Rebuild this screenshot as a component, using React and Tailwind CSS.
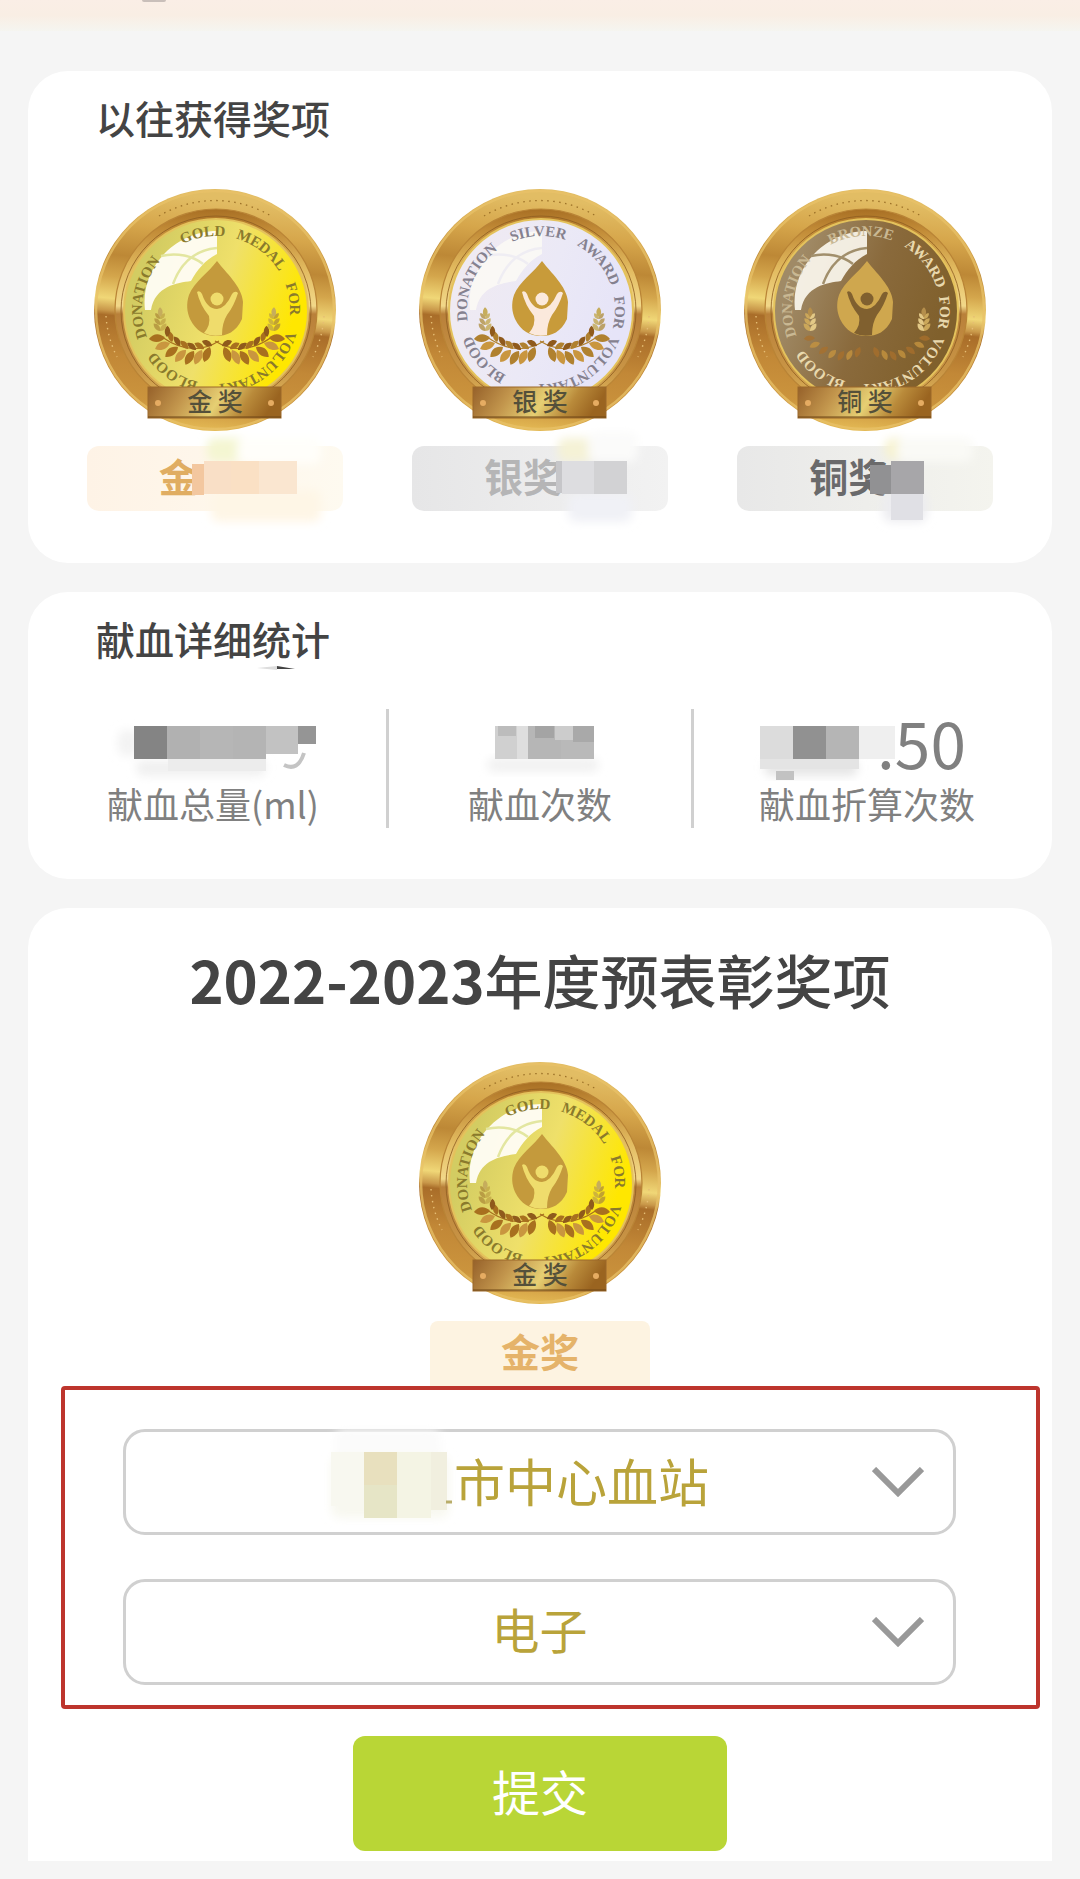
import React from "react";

const CJK = "font-['Noto_Sans_CJK_SC',sans-serif]";

const THEMES = {
  gold: {
    label: "金 奖",
    face: ["#d3cc62", "#efe06a", "#ffe700"],
    ink: "#8a7a2c",
    drop: "#c49a3c",
    figure: "#efdc6c",
    leaf: "#a8701f",
    glareLine: "#e3e6a0",
    glare: 0.95,
    words: [["GOLD", -10], ["MEDAL", 37], ["FOR", 82], ["VOLUNTARY", 143], ["BLOOD", 215], ["DONATION", 280]],
  },
  silver: {
    label: "银 奖",
    face: ["#efeaf2", "#ebe9f6", "#e6e4f8"],
    ink: "#85818f",
    drop: "#c89b3a",
    figure: "#fbe9dc",
    leaf: "#b0812f",
    glareLine: "#efedf3",
    glare: 0.7,
    words: [["SILVER", -2], ["AWARD", 50], ["FOR", 92], ["VOLUNTARY", 147], ["BLOOD", 229], ["DONATION", 293]],
  },
  bronze: {
    label: "铜 奖",
    face: ["#a08a66", "#8a6a3c", "#80602c"],
    ink: "#e9d9ae",
    drop: "#cfa74e",
    figure: "#80602f",
    leaf: "#a9702c",
    glareLine: "#a18f6c",
    glare: 0.88,
    words: [["BRONZE", -4], ["AWARD", 52], ["FOR", 92], ["VOLUNTARY", 147], ["BLOOD", 217], ["DONATION", 281]],
  },
};

const LEAVES = [
  [8, 158, 35], [16, 161, 30], [24, 162, 24], [32, 161, 14], [40, 158, 4], [48, 154, -12], [53, 149, -30],
];

function Leaf({ x, y, r, fill, s = 1 }) {
  return (
    <path
      d="M0 0 C4 -5 10 -5 14 0 C10 4 4 4 0 0Z"
      fill={fill}
      transform={`translate(${x} ${y}) rotate(${r}) scale(${s})`}
    />
  );
}

function Branch({ t, bronze }) {
  return (
    <g>
      {!bronze && <path d="M-3 153 Q24 170 54 149" fill="none" stroke={t.leaf} strokeWidth="1.2" />}
      {LEAVES.map(([x, y, r], i) => (
        <g key={i} opacity={bronze ? 0.75 : 1}>
          {!bronze && <Leaf x={x - 4} y={y} r={r - 62} fill={i % 2 ? t.leaf : "#8f5a1c"} s={0.8} />}
          <Leaf x={x - 2} y={y + 1} r={r + 34} fill={i % 2 ? "#c9963f" : t.leaf} s={bronze ? 0.8 : 1.15} />
        </g>
      ))}
      {[0, 1, 2].map((i) => (
        <g key={i} opacity={bronze ? 1 : 0.75}>
          <Leaf x={56} y={143 - i * 6} r={-130} fill={bronze ? "#e3c987" : "#c0a446"} s={0.7 - i * 0.08} />
          <Leaf x={56} y={143 - i * 6} r={-50} fill={bronze ? "#cba75a" : "#ae8c3a"} s={0.7 - i * 0.08} />
        </g>
      ))}
      <Leaf x={56} y={129} r={-90} fill={bronze ? "#b58f4c" : "#c6ad5c"} s={0.7} />
    </g>
  );
}

function Medal({ kind, id }) {
  const t = THEMES[kind];
  const bronze = kind === "bronze";
  const u = (n) => `${id}-${n}`;
  return (
    <svg viewBox="0 0 244 244" className="block size-[244px]" role="img" aria-label={t.label}>
      <defs>
        <linearGradient id={u("rim")} x1="0.1" y1="0" x2="0" y2="1">
          <stop offset="0" stopColor="#e2bd64" />
          <stop offset="0.14" stopColor="#d6a64b" />
          <stop offset="0.27" stopColor="#bd8836" />
          <stop offset="0.36" stopColor="#d4a64c" />
          <stop offset="0.45" stopColor="#f0d777" />
          <stop offset="0.5" stopColor="#c9984a" />
          <stop offset="0.52" stopColor="#a96d29" />
          <stop offset="0.68" stopColor="#c28837" />
          <stop offset="0.85" stopColor="#cb943d" />
          <stop offset="1" stopColor="#f0cc60" />
        </linearGradient>
        <linearGradient id={u("lip")} x1="0" y1="0" x2="0" y2="1">
          <stop offset="0" stopColor="#a86f24" />
          <stop offset="0.1" stopColor="#c18a36" />
          <stop offset="0.3" stopColor="#e2bb60" />
          <stop offset="0.48" stopColor="#f2d889" />
          <stop offset="0.52" stopColor="#b9803a" />
          <stop offset="0.8" stopColor="#c99545" />
          <stop offset="1" stopColor="#e4c063" />
        </linearGradient>
        <linearGradient id={u("face")} x1="0" y1="0.3" x2="1" y2="0.65">
          <stop offset="0.1" stopColor={t.face[0]} />
          <stop offset="0.5" stopColor={t.face[1]} />
          <stop offset="0.9" stopColor={t.face[2]} />
        </linearGradient>
        <linearGradient id={u("plate")} x1="0" y1="0" x2="1" y2="0.15">
          <stop offset="0" stopColor="#96612a" />
          <stop offset="0.3" stopColor="#c2954c" />
          <stop offset="0.58" stopColor="#e6cf73" />
          <stop offset="0.8" stopColor="#b98a3a" />
          <stop offset="1" stopColor="#9a6420" />
        </linearGradient>
        <path id={u("arc")} d="M49 122 A74 74 0 0 1 197 122" />
      </defs>

      <circle cx="122" cy="122" r="121" fill={`url(#${u("rim")})`} />
      <circle cx="122" cy="122" r="119" fill="none" stroke="#e8c268" strokeWidth="2.5" opacity="0.75" />
      <path d="M66 28 A109 109 0 0 1 178 28" fill="none" stroke="#9c7128" strokeWidth="1.3" strokeDasharray="1.5 4.5" />
      <path d="M13 128 A109 109 0 0 0 24 169 M231 128 A109 109 0 0 1 220 169" fill="none" stroke="#e6bd74" strokeWidth="1.4" strokeDasharray="1.5 4.5" />
      <circle cx="123" cy="122" r="101" fill={`url(#${u("lip")})`} />
      <circle cx="123" cy="122" r="101" fill="none" stroke="#b98436" strokeWidth="1.2" />
      <circle cx="123" cy="123" r="95" fill="none" stroke="#8d5c20" strokeWidth="1" opacity="0.8" />
      <circle cx="123" cy="123" r="92" fill={`url(#${u("face")})`} stroke="#e4c25c" strokeWidth="2" />

      <path
        d="M52 122 C47 80 82 43 124 43 L124 66 C112 72 104 82 98 93 C84 95 62 98 58 122Z"
        fill="#fffdf5"
        opacity={t.glare}
      />
      <path d="M68 68 C84 64 100 68 110 76 M80 96 C88 74 102 62 124 60" fill="none" stroke={t.glareLine} strokeWidth="2.5" />

      {t.words.map(([word, angle]) => (
        <g key={word} transform={`rotate(${angle} 123 122)`}>
          <text
            fontFamily="Liberation Serif, serif"
            fontSize="15"
            fontWeight="700"
            fill={bronze && (word === "BRONZE" || word === "DONATION") ? "#c9b893" : t.ink}
            textAnchor="middle"
          >
            <textPath href={`#${u("arc")}`} startOffset="50%">
              {word}
            </textPath>
          </text>
        </g>
      ))}

      <path
        d="M124 73 C132 84 149 98 150 114 L149 131 C143 144 134 148 123 148 C112 148 103 143 97 131 C94 124 93 116 96 107 C101 94 116 84 124 73Z"
        fill={t.drop}
      />
      <circle cx="124" cy="111" r="6.5" fill={t.figure} />
      <path
        d="M104 104 Q107 102 109 106 Q114 121 124 121 Q133 120 139 106 Q142 102 145 105 Q141 118 134 127 Q129 135 129 147 Q119 149 111 145 Q118 137 116 128 Q107 117 104 104Z"
        fill={t.figure}
      />
      <g transform="translate(125 0)">
        <Branch t={t} bronze={bronze} />
      </g>
      <g transform="translate(123 0) scale(-1 1)">
        <Branch t={t} bronze={bronze} />
      </g>

      <rect x="55" y="199" width="133" height="31" fill={`url(#${u("plate")})`} stroke="#9b692a" strokeWidth="1" />
      <path d="M55 229 H188" stroke="#6f4616" strokeWidth="1" />
      <circle cx="65" cy="215" r="3" fill="#e6ac62" />
      <circle cx="178" cy="215" r="3" fill="#e6ac62" />
      <text x="122" y="223" fontFamily="Noto Sans CJK SC, sans-serif" fontSize="25" fontWeight="500" fill="#54503a" textAnchor="middle">
        {t.label}
      </text>
    </svg>
  );
}

/* Pixelated patch that hides private values. Each block is [x, y, w, h, colour]. */
function Mosaic({ id, w, h, haze = [], blocks = [], className = "", children }) {
  return (
    <svg viewBox={`0 0 ${w} ${h}`} width={w} height={h} aria-hidden="true" className={`overflow-visible ${className}`}>
      <defs>
        <filter id={id} x="-30%" y="-30%" width="160%" height="160%">
          <feGaussianBlur stdDeviation="5" />
        </filter>
      </defs>
      <g filter={`url(#${id})`}>
        {haze.map(([x, y, bw, bh, c], i) => (
          <rect key={i} x={x} y={y} width={bw} height={bh} rx="8" fill={c} />
        ))}
      </g>
      {blocks.map(([x, y, bw, bh, c], i) => (
        <rect key={i} x={x} y={y} width={bw} height={bh} fill={c} />
      ))}
      {children}
    </svg>
  );
}

const AWARDS = [
  {
    kind: "gold",
    text: "金",
    box: "bg-linear-to-r from-[#fef3e6] to-[#fefaf0] text-[#e0ad62]",
    haze: [[120, -8, 56, 24, "#f4f6d2"], [150, -8, 84, 26, "#fffefa"], [124, 44, 110, 32, "#fef6e6"]],
    blocks: [[105, 18, 12, 31, "#f3c79f"], [117, 15, 27, 33, "#f9dfc6"], [144, 15, 28, 33, "#fae0c4"], [172, 15, 38, 33, "#fae6d0"]],
  },
  {
    kind: "silver",
    text: "银奖",
    box: "bg-linear-to-r from-[#e6e6e7] to-[#f2f2f2] text-[#b5b5b6]",
    haze: [[146, -8, 40, 24, "#f5f2d6"], [176, -14, 50, 30, "#fbfbfa"], [156, 48, 64, 28, "#f0f1f6"]],
    blocks: [[144, 15, 6, 32, "#c6c6c9"], [150, 15, 32, 33, "#dddde0"], [182, 15, 33, 33, "#d2d2d4"]],
  },
  {
    kind: "bronze",
    text: "铜奖",
    box: "bg-linear-to-r from-[#e8e8e8] to-[#f4f4ee] text-[#6a6a6b]",
    haze: [[148, -8, 36, 22, "#f7f3d0"], [160, -8, 76, 24, "#fafaf6"], [146, 46, 44, 30, "#ececf0"]],
    blocks: [[133, 19, 21, 29, "#919193"], [154, 15, 33, 33, "#a7a6a9"], [154, 48, 32, 26, "#e0e0e5"]],
  },
];

function AwardBadge({ award }) {
  return (
    <div className={`relative mt-3.5 flex h-[65px] w-64 items-center rounded-xl pb-2 pl-[72px] ${award.box}`}>
      <span className="text-[39px] leading-12 font-bold">{award.text}</span>
      <Mosaic id={`hz-${award.kind}`} w={256} h={65} haze={award.haze} blocks={award.blocks} className="absolute inset-0" />
    </div>
  );
}

function SectionTitle({ children }) {
  return <h2 className="pl-[68px] text-[39px] leading-12 font-medium text-[#444]">{children}</h2>;
}

function Picker({ id, label, option, size, children }) {
  return (
    <div className="relative">
      <select
        id={id}
        aria-label={label}
        className={`h-[106px] w-full appearance-none rounded-[22px] border-[3px] border-[#d0d0d0] bg-white text-center text-[#b9a33a] [text-align-last:center] ${size}`}
      >
        <option>{option}</option>
      </select>
      {children}
      <svg viewBox="0 0 52 30" aria-hidden="true" className="pointer-events-none absolute top-[38px] right-8 h-[30px] w-[52px]">
        <path d="M2 2 L26 26 L50 2" fill="none" stroke="#999" strokeWidth="6" />
      </svg>
    </div>
  );
}

export default function App() {
  return (
    <div className={`min-h-screen bg-[#f5f5f5] ${CJK}`}>
      <header className="h-[31px] overflow-hidden bg-linear-to-b from-[#faeee6] via-[#f9eee4] to-[#f5f5f0]">
        <div className="ml-[142px] h-0.5 w-6 rounded-b-full bg-[#c9bfba]" />
      </header>

      <main className="flex flex-col gap-[29px] px-7 pt-10 pb-[18px]">
        <section className="rounded-[40px] bg-white pt-[22px] pb-[52px]">
          <SectionTitle>以往获得奖项</SectionTitle>
          <ul className="mt-[47px] grid grid-cols-3 px-6">
            {AWARDS.map((a) => (
              <li key={a.kind} className="flex flex-col items-center">
                <Medal kind={a.kind} id={`m-${a.kind}`} />
                <AwardBadge award={a} />
              </li>
            ))}
          </ul>
        </section>

        <section className="rounded-[40px] bg-white pt-[22px] pb-[51px]">
          <div className="relative">
            <SectionTitle>献血详细统计</SectionTitle>
            <svg viewBox="0 0 40 4" aria-hidden="true" className="absolute top-[52px] left-[229px] h-1 w-10">
              <path d="M0 2 L20 0 V4Z" fill="#ddd" />
              <path d="M20 0 L38 3 L20 3Z" fill="#444" />
            </svg>
          </div>
          <dl className="mt-[47px] flex h-[119px] px-3 text-center text-[#808080]">
            <div className="flex flex-1 flex-col-reverse items-center justify-center gap-1">
              <dt className="text-[36px] leading-11">献血总量(ml)</dt>
              <dd className="flex h-16 items-start justify-center">
                <Mosaic
                  id="hz-total"
                  w={206}
                  h={64}
                  className="mt-[13px]"
                  haze={[[8, 4, 20, 26, "#f3f3f3"], [26, 34, 130, 16, "#f0f0f0"]]}
                  blocks={[
                    [24, 0, 33, 33, "#848484"], [57, 0, 33, 33, "#b1b1b1"], [90, 0, 33, 33, "#b6b6b6"],
                    [123, 0, 33, 33, "#b4b4b4"], [156, 0, 32, 28, "#c2c2c2"], [188, 0, 18, 18, "#959595"],
                    [58, 33, 98, 12, "#ececec"],
                  ]}
                >
                  <path d="M174 39 Q188 46 194 27" fill="none" stroke="#c4c4c4" strokeWidth="4" />
                </Mosaic>
              </dd>
            </div>
            <div className="flex w-[308px] flex-col-reverse items-center justify-center gap-1 border-x-[3px] border-[#d0d0d0]">
              <dt className="text-[36px] leading-11">献血次数</dt>
              <dd className="flex h-16 items-start justify-center">
                <Mosaic
                  id="hz-count"
                  w={99}
                  h={64}
                  className="mt-[13px] ml-2"
                  haze={[[-8, 32, 112, 14, "#f1f1f1"]]}
                  blocks={[
                    [0, 0, 33, 33, "#d0d0d0"], [3, 0, 18, 10, "#bcbcbc"], [22, 0, 11, 33, "#dedede"],
                    [33, 0, 33, 33, "#b6b6b6"], [40, 0, 19, 12, "#a4a4a4"], [60, 0, 18, 14, "#cccccc"],
                    [66, 14, 33, 19, "#b9b9b9"], [78, 0, 21, 16, "#a9a9a9"],
                  ]}
                />
              </dd>
            </div>
            <div className="flex flex-1 flex-col-reverse items-center justify-center gap-1">
              <dt className="text-[36px] leading-11">献血折算次数</dt>
              <dd className="flex h-16 items-start justify-center pr-2 text-[64px] leading-14">
                <Mosaic
                  id="hz-conv"
                  w={117}
                  h={64}
                  className="mt-[13px]"
                  haze={[[4, 34, 94, 16, "#e6e6e6"]]}
                  blocks={[
                    [0, 0, 33, 33, "#dcdcdc"], [33, 0, 33, 33, "#919191"], [66, 0, 33, 33, "#b5b5b5"],
                    [99, 0, 36, 33, "#efefef"], [0, 33, 99, 10, "#e4e4e4"], [16, 45, 18, 9, "#c2c2c2"],
                  ]}
                />
                <span>.50</span>
              </dd>
            </div>
          </dl>
        </section>

        <section className="flex flex-col items-center rounded-t-[40px] bg-white pt-[35px] pb-2.5">
          <h1 className="text-[58px] leading-18 font-medium text-[#444]">
            <span className="font-bold">2022-2023</span>年度预表彰奖项
          </h1>
          <div className="mt-[46px]">
            <Medal kind="gold" id="m-current" />
          </div>
          <p className="mt-4 flex h-[65px] w-[220px] items-center justify-center rounded-t-lg bg-[#fdf3e1] pb-2 text-[39px] leading-12 font-bold text-[#e5b36a]">
            金奖
          </p>

          <form className="flex w-full flex-col items-center" onSubmit={(e) => e.preventDefault()}>
            <div className="w-full pr-3 pl-[33px]">
              <div className="flex flex-col gap-11 rounded border-4 border-[#bd352d] pt-[39px] pr-20 pb-5 pl-[58px]">
                <Picker id="station" label="血站" option="市中心血站" size="pb-1 pl-[84px] text-[51px]">
                  <Mosaic
                    id="hz-station"
                    w={120}
                    h={66}
                    className="pointer-events-none absolute top-[23px] left-[208px]"
                    haze={[[4, -22, 106, 30, "#fbfbfb"], [0, 4, 118, 62, "#f8f8f0"]]}
                    blocks={[[0, 0, 33, 54, "#f8f8f0"], [33, 0, 33, 33, "#e8e0be"], [33, 33, 33, 33, "#e6e5c6"], [66, 0, 34, 66, "#f4f4e4"], [100, 0, 16, 58, "#f1efdf"]]}
                  >
                    <path d="M115 50 h6" stroke="#b9ad6a" strokeWidth="3" />
                  </Mosaic>
                </Picker>
                <Picker id="format" label="证书类型" option="电子" size="pb-2 text-[48px]" />
              </div>
            </div>
            <button type="submit" className="mt-[27px] h-[115px] w-[374px] rounded-xl bg-[#b9d636] pb-2 text-[48px] leading-none text-white">
              提交
            </button>
          </form>
        </section>
      </main>
    </div>
  );
}
